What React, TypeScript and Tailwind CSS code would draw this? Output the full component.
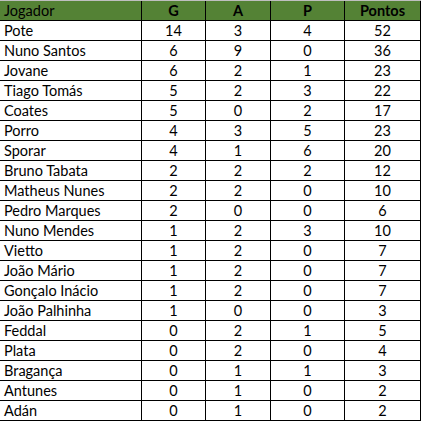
import React from "react";

const rows: [string, number, number, number, number][] = [
  ["Pote", 14, 3, 4, 52],
  ["Nuno Santos", 6, 9, 0, 36],
  ["Jovane", 6, 2, 1, 23],
  ["Tiago Tomás", 5, 2, 3, 22],
  ["Coates", 5, 0, 2, 17],
  ["Porro", 4, 3, 5, 23],
  ["Sporar", 4, 1, 6, 20],
  ["Bruno Tabata", 2, 2, 2, 12],
  ["Matheus Nunes", 2, 2, 0, 10],
  ["Pedro Marques", 2, 0, 0, 6],
  ["Nuno Mendes", 1, 2, 3, 10],
  ["Vietto", 1, 2, 0, 7],
  ["João Mário", 1, 2, 0, 7],
  ["Gonçalo Inácio", 1, 2, 0, 7],
  ["João Palhinha", 1, 0, 0, 3],
  ["Feddal", 0, 2, 1, 5],
  ["Plata", 0, 2, 0, 4],
  ["Bragança", 0, 1, 1, 3],
  ["Antunes", 0, 1, 0, 2],
  ["Adán", 0, 1, 0, 2],
];

const grid = "grid grid-cols-[142px_64px_65px_74px_76px] w-[421px]";

export default function App() {
  return (
    <div
      className="w-[421px] h-[421px] bg-white text-black overflow-hidden"
      style={{ fontFamily: "Lato, 'Open Sans', sans-serif" }}
    >
      <div className={`${grid} h-[21px] bg-[#548235] border-t border-t-[#bfbfbf] border-b border-b-black text-[14.5px] leading-[20px]`}>
        <div className="border-r border-black pl-[4px]">Jogador</div>
        <div className="border-r border-black text-center font-bold">G</div>
        <div className="border-r border-black text-center font-bold">A</div>
        <div className="border-r border-black text-center font-bold">P</div>
        <div className="border-r border-black text-center font-bold">Pontos</div>
      </div>
      {rows.map((r) => (
        <div key={r[0]} className={`${grid} h-[20px] border-b border-black text-[14.5px] leading-[20px]`}>
          <div className="border-r border-black pl-[4px] whitespace-nowrap">{r[0]}</div>
          <div className="border-r border-black text-center">{r[1]}</div>
          <div className="border-r border-black text-center">{r[2]}</div>
          <div className="border-r border-black text-center">{r[3]}</div>
          <div className="border-r border-black text-center">{r[4]}</div>
        </div>
      ))}
    </div>
  );
}
